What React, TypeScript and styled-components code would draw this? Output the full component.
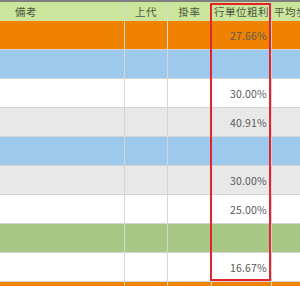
import React from "react";
import styled, { createGlobalStyle } from "styled-components";

interface RowType {
    background: string;
}

interface CellType {
    align?: string;
    pad?: string;
}

const GlobalStyle = createGlobalStyle`
    html, body {
        margin: 0;
        padding: 0;
        background: #ffffff;
        overflow: hidden;
    }
`;

const Sheet = styled.div`
    position: relative;
    width: 300px;
    height: 286px;
    overflow: hidden;
    border-top: 2px solid #7f7f7f;
    box-sizing: border-box;
    font-family: "Noto Sans CJK JP", "Noto Sans", sans-serif;
`;

const Row = styled.div<RowType>`
    display: grid;
    grid-template-columns: 125px 43px 44px 60px 80px;
    height: 29px;
    box-sizing: border-box;
    border-bottom: 1px solid #d4d4d4;
    background: ${(props) => props.background};
`;

const HeaderRow = styled(Row)`
    height: 19px;
    border-bottom: none;
`;

const Cell = styled.div<CellType>`
    display: flex;
    align-items: center;
    justify-content: ${(props) => props.align || "center"};
    padding: ${(props) => props.pad || "0"};
    border-right: 1px solid #d6d6d6;
    box-sizing: border-box;
    white-space: nowrap;
    overflow: hidden;
`;

const HeadText = styled.span`
    font-size: 10.5px;
    color: #4b5441;
    letter-spacing: 0.5px;
`;

const Percent = styled.span`
    font-size: 10.5px;
    color: #595959;
    letter-spacing: 0.2px;
`;

const Highlight = styled.div`
    position: absolute;
    left: 210px;
    top: 1px;
    width: 61px;
    height: 278px;
    border: 2px solid #e5232d;
    box-sizing: border-box;
    pointer-events: none;
`;

const rows = [
    { bg: "#ef8300", value: "27.66%" },
    { bg: "#9dcaec", value: "" },
    { bg: "#ffffff", value: "30.00%" },
    { bg: "#e8e8e8", value: "40.91%" },
    { bg: "#9dcaec", value: "" },
    { bg: "#e8e8e8", value: "30.00%" },
    { bg: "#ffffff", value: "25.00%" },
    { bg: "#a7c785", value: "" },
    { bg: "#ffffff", value: "16.67%" },
    { bg: "#ef8300", value: "" },
];

export default function App() {
    return (
        <>
            <GlobalStyle />
            <Sheet>
                <HeaderRow background="#cbe69c">
                    <Cell align="flex-start" pad="0 0 0 15px"><HeadText>備考</HeadText></Cell>
                    <Cell><HeadText>上代</HeadText></Cell>
                    <Cell><HeadText>掛率</HeadText></Cell>
                    <Cell><HeadText>行単位粗利</HeadText></Cell>
                    <Cell align="flex-start" pad="0 0 0 2px"><HeadText>平均歩留</HeadText></Cell>
                </HeaderRow>
                {rows.map((r, i) => (
                    <Row key={i} background={r.bg}>
                        <Cell />
                        <Cell />
                        <Cell />
                        <Cell align="flex-end" pad="0 4px 0 0"><Percent>{r.value}</Percent></Cell>
                        <Cell />
                    </Row>
                ))}
                <Highlight />
            </Sheet>
        </>
    );
}
